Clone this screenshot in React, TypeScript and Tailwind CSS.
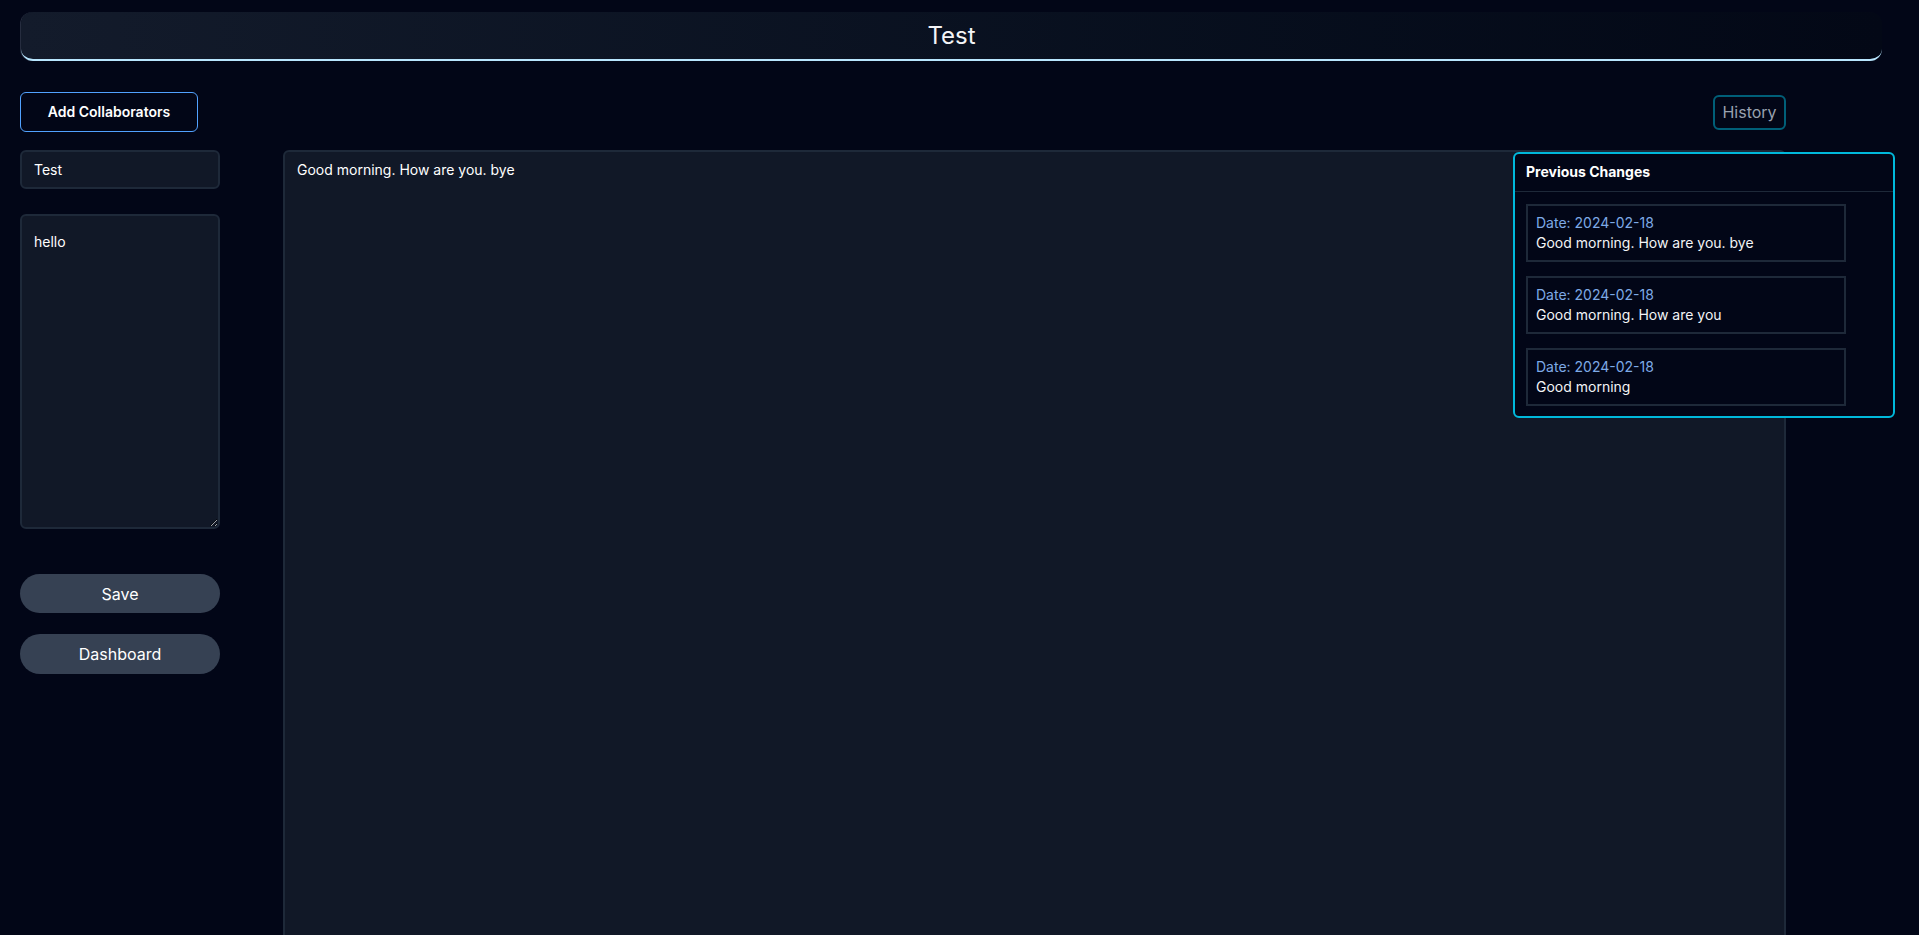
import React from "react";

const changes = [
  { date: "2024-02-18", text: "Good morning. How are you. bye" },
  { date: "2024-02-18", text: "Good morning. How are you" },
  { date: "2024-02-18", text: "Good morning" },
];

export default function App() {
  return (
    <div
      className="min-h-screen w-full overflow-hidden bg-[#020617] text-white"
      style={{ fontFamily: "Inter, 'Noto Sans', sans-serif" }}
    >
      <div className="pt-3">
        <header className="ml-[21px] mr-[37px] flex h-[49px] items-center justify-center rounded-xl border-b-2 border-sky-200 bg-gradient-to-r from-[#131b2b] to-[#030816] shadow-[-1px_0_0_0_rgba(148,163,184,0.25)]">
          <h1 className="text-2xl font-normal text-gray-100">Test</h1>
        </header>
      </div>

      <div className="mt-[31px] flex items-center justify-between pl-5 pr-[133px]">
        <button className="flex h-10 w-[178px] items-center justify-center rounded-md border border-blue-400 text-sm font-semibold text-white">
          Add Collaborators
        </button>
        <div className="relative">
          <button className="flex h-[35px] w-[73px] items-center justify-center rounded-md border-2 border-cyan-800 text-base text-gray-400">
            History
          </button>
          <div className="absolute right-[-109px] top-[57px] z-10 w-[382px] rounded-md border-2 border-cyan-500 bg-[#020617]">
            <div className="flex h-[38px] items-center border-b border-gray-800 px-[11px] text-sm font-bold text-white">
              Previous Changes
            </div>
            <div className="flex flex-col gap-[14px] px-[11px] pb-[10px] pt-3">
              {changes.map((c, i) => (
                <div
                  key={i}
                  className="w-80 border-2 border-gray-800 px-2 py-[7px] text-sm leading-5"
                >
                  <div className="text-[#7eaae6]">Date: {c.date}</div>
                  <div className="text-gray-100">{c.text}</div>
                </div>
              ))}
            </div>
          </div>
        </div>
      </div>

      <div className="mt-[18px] flex items-start gap-[63px] pl-5 pr-[133px]">
        <div className="flex w-[200px] shrink-0 flex-col">
          <input
            defaultValue="Test"
            className="h-[39px] w-full rounded-md border-2 border-gray-800 bg-[#111827] px-3 text-sm text-white outline-none"
          />
          <textarea
            defaultValue="hello"
            className="mt-[25px] h-[315px] w-full rounded-md border-2 border-gray-800 bg-[#111827] px-3 pt-4 text-sm leading-5 text-white outline-none"
          />
          <button className="mt-[45px] h-[39px] w-full rounded-full bg-gray-700 text-base text-white">
            Save
          </button>
          <button className="mt-[21px] h-[40px] w-full rounded-full bg-gray-700 text-base text-white">
            Dashboard
          </button>
        </div>
        <textarea
          defaultValue="Good morning. How are you. bye"
          className="h-[820px] flex-1 resize-none rounded-md border-2 border-gray-800 bg-[#111827] px-3 pt-2 text-sm leading-5 text-white outline-none"
        />
      </div>
    </div>
  );
}
